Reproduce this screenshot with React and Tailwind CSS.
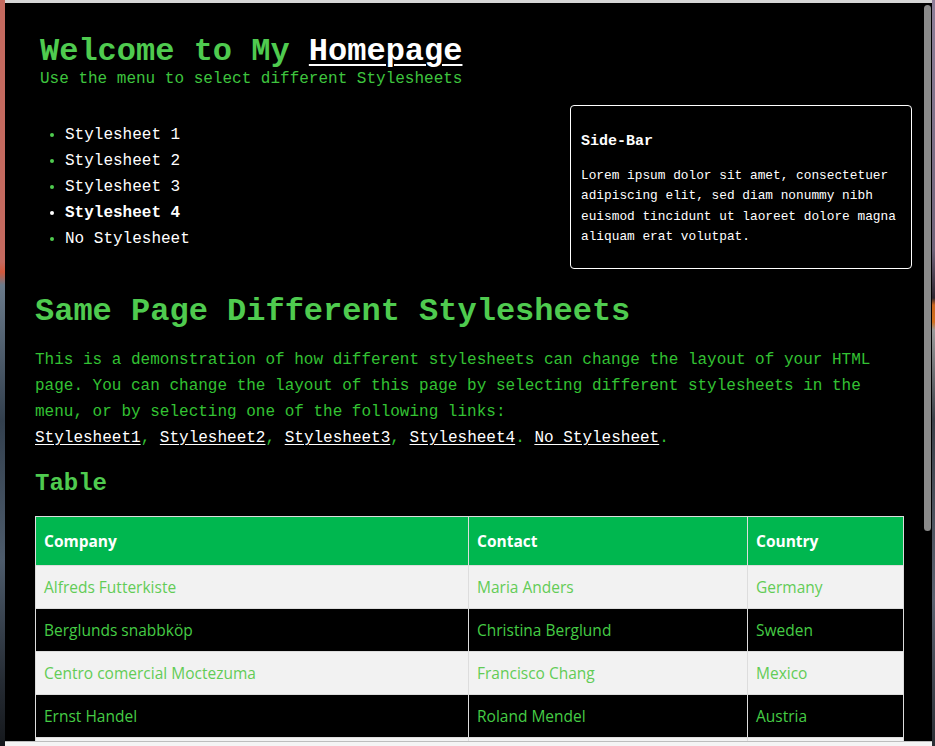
import React from "react";

const mono = { fontFamily: '"Liberation Mono", "Courier New", monospace' };

const menu = [
  { label: "Stylesheet 1" },
  { label: "Stylesheet 2" },
  { label: "Stylesheet 3" },
  { label: "Stylesheet 4", active: true },
  { label: "No Stylesheet" },
];

const rows = [
  ["Alfreds Futterkiste", "Maria Anders", "Germany"],
  ["Berglunds snabbköp", "Christina Berglund", "Sweden"],
  ["Centro comercial Moctezuma", "Francisco Chang", "Mexico"],
  ["Ernst Handel", "Roland Mendel", "Austria"],
];

export default function App() {
  return (
    <div className="w-[935px] h-[746px] flex overflow-hidden bg-[#f4f4f4]">
      {/* desktop behind the window, left edge */}
      <div className="w-[5px] shrink-0 bg-[linear-gradient(to_bottom,#c46a5f_0,#c46a5f_262px,#d2583c_272px,#6a7a8a_285px,#33404e_420px,#4d5b6b_560px,#262c34_680px,#15181c_746px)]" />

      <div className="flex-1 flex flex-col min-w-0">
        <div className="h-[742px] flex flex-col border-t-[3px] border-[#d6d6d6] border-b border-b-[#bdbdbd]">
          <div className="flex flex-1 min-h-0 bg-black">
            {/* page content */}
            <div className="flex-1 overflow-hidden" style={mono}>
              <div className="pt-[31px] pl-[35px]">
                <h1 className="text-[32px] leading-[36px] font-bold text-[#4fcb4f]">
                  Welcome to My{" "}
                  <a className="text-white underline decoration-2 underline-offset-[4px]">Homepage</a>
                </h1>
                <p className="text-[16px] leading-[18px] text-[#3ec43e]">
                  Use the menu to select different Stylesheets
                </p>
              </div>

              <div className="mt-[17px] pl-[30px] pr-[12px] flex justify-between items-start">
                <ul className="mt-[17px] pl-[30px] list-disc">
                  {menu.map((m) => (
                    <li
                      key={m.label}
                      className={`text-[16px] leading-[26px] text-white ${
                        m.active ? "font-bold marker:text-white" : "marker:text-[#4fcb4f]"
                      }`}
                    >
                      {m.label}
                    </li>
                  ))}
                </ul>

                <div className="w-[342px] border border-white rounded-[4px] px-[10px] pt-[26px] pb-[21px] text-white">
                  <h3 className="text-[15px] leading-[20px] font-bold">Side-Bar</h3>
                  <p className="mt-[14px] text-[12.8px] leading-[20.3px]">
                    Lorem ipsum dolor sit amet, consectetuer adipiscing elit, sed diam nonummy nibh euismod
                    tincidunt ut laoreet dolore magna aliquam erat volutpat.
                  </p>
                </div>
              </div>

              <div className="pl-[30px] pr-[21px]">
                <h2 className="mt-[23px] text-[32px] leading-[40px] font-bold text-[#4fcb4f]">
                  Same Page Different Stylesheets
                </h2>
                <p className="mt-[15px] text-[16px] leading-[26px] text-[#33c233]">
                  This is a demonstration of how different stylesheets can change the layout of your HTML page.
                  You can change the layout of this page by selecting different stylesheets in the menu, or by
                  selecting one of the following links:
                  <br />
                  <a className="text-white underline underline-offset-2">Stylesheet1</a>,{" "}
                  <a className="text-white underline underline-offset-2">Stylesheet2</a>,{" "}
                  <a className="text-white underline underline-offset-2">Stylesheet3</a>,{" "}
                  <a className="text-white underline underline-offset-2">Stylesheet4</a>.{" "}
                  <a className="text-white underline underline-offset-2">No Stylesheet</a>.
                </p>

                <h3 className="mt-[18px] text-[24px] leading-[30px] font-bold text-[#4fcb4f]">Table</h3>

                <table
                  className="mt-[17px] w-[868px] border-collapse table-fixed"
                  style={{ fontFamily: '"Open Sans", "Noto Sans", sans-serif' }}
                >
                  <colgroup>
                    <col className="w-[433px]" />
                    <col className="w-[279px]" />
                    <col className="w-[156px]" />
                  </colgroup>
                  <thead>
                    <tr className="bg-[#00b74f]">
                      {["Company", "Contact", "Country"].map((h) => (
                        <th
                          key={h}
                          className="h-[49px] border border-[#dddddd] px-[8px] text-left text-[15.5px] font-bold text-white"
                        >
                          {h}
                        </th>
                      ))}
                    </tr>
                  </thead>
                  <tbody>
                    {rows.map((r, i) => (
                      <tr key={r[0]} className={i % 2 === 0 ? "bg-[#f2f2f2] text-[#62cc56]" : "bg-black text-[#45cc45]"}>
                        {r.map((c) => (
                          <td key={c} className="h-[43px] border border-[#dddddd] px-[8px] text-[15.5px]">
                            {c}
                          </td>
                        ))}
                      </tr>
                    ))}
                    {/* next row, only its top edge is in view */}
                    <tr className="bg-[#f2f2f2]">
                      <td className="h-[43px] border border-[#dddddd]" />
                      <td className="h-[43px] border border-[#dddddd]" />
                      <td className="h-[43px] border border-[#dddddd]" />
                    </tr>
                  </tbody>
                </table>
              </div>
            </div>

            {/* scrollbar */}
            <div className="w-[8px] shrink-0 pt-[2px]">
              <div className="w-[7px] h-[526px] rounded-full bg-[#8a8a8a]" />
            </div>
          </div>
        </div>
        <div className="flex-1 bg-[#f4f4f4]" />
      </div>

      {/* desktop behind the window, right edge */}
      <div className="w-[3px] shrink-0 bg-[linear-gradient(to_bottom,#8c7e98_0,#6e6278_250px,#2e2630_298px,#c8651e_305px,#d0701e_322px,#9a9a9a_330px,#3b4048_420px,#5a6270_600px,#2a2e34_746px)]" />
    </div>
  );
}
